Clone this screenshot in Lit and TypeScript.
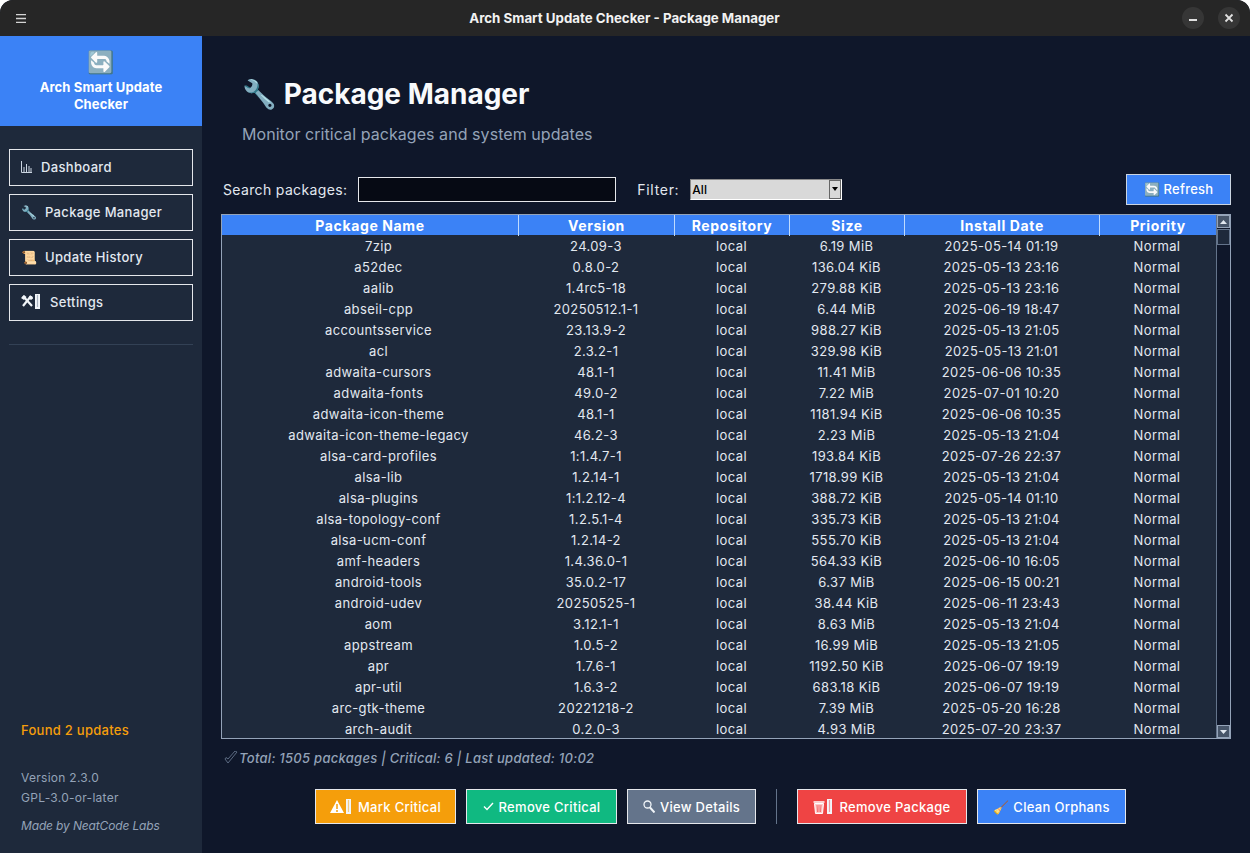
import { LitElement, html, css, svg } from "lit";
import { customElement } from "lit/decorators.js";

const ROWS: string[][] = [
  ["7zip", "24.09-3", "6.19 MiB", "2025-05-14 01:19"],
  ["a52dec", "0.8.0-2", "136.04 KiB", "2025-05-13 23:16"],
  ["aalib", "1.4rc5-18", "279.88 KiB", "2025-05-13 23:16"],
  ["abseil-cpp", "20250512.1-1", "6.44 MiB", "2025-06-19 18:47"],
  ["accountsservice", "23.13.9-2", "988.27 KiB", "2025-05-13 21:05"],
  ["acl", "2.3.2-1", "329.98 KiB", "2025-05-13 21:01"],
  ["adwaita-cursors", "48.1-1", "11.41 MiB", "2025-06-06 10:35"],
  ["adwaita-fonts", "49.0-2", "7.22 MiB", "2025-07-01 10:20"],
  ["adwaita-icon-theme", "48.1-1", "1181.94 KiB", "2025-06-06 10:35"],
  ["adwaita-icon-theme-legacy", "46.2-3", "2.23 MiB", "2025-05-13 21:04"],
  ["alsa-card-profiles", "1:1.4.7-1", "193.84 KiB", "2025-07-26 22:37"],
  ["alsa-lib", "1.2.14-1", "1718.99 KiB", "2025-05-13 21:04"],
  ["alsa-plugins", "1:1.2.12-4", "388.72 KiB", "2025-05-14 01:10"],
  ["alsa-topology-conf", "1.2.5.1-4", "335.73 KiB", "2025-05-13 21:04"],
  ["alsa-ucm-conf", "1.2.14-2", "555.70 KiB", "2025-05-13 21:04"],
  ["amf-headers", "1.4.36.0-1", "564.33 KiB", "2025-06-10 16:05"],
  ["android-tools", "35.0.2-17", "6.37 MiB", "2025-06-15 00:21"],
  ["android-udev", "20250525-1", "38.44 KiB", "2025-06-11 23:43"],
  ["aom", "3.12.1-1", "8.63 MiB", "2025-05-13 21:04"],
  ["appstream", "1.0.5-2", "16.99 MiB", "2025-05-13 21:05"],
  ["apr", "1.7.6-1", "1192.50 KiB", "2025-06-07 19:19"],
  ["apr-util", "1.6.3-2", "683.18 KiB", "2025-06-07 19:19"],
  ["arc-gtk-theme", "20221218-2", "7.39 MiB", "2025-05-20 16:28"],
  ["arch-audit", "0.2.0-3", "4.93 MiB", "2025-07-20 23:37"],
];

const missingGlyph = (hatch: string) => html`<svg class="tofu" viewBox="0 0 5 15"><rect width="5" height="15" fill="#f1f5f9"/>${svg`<path d="M2.500 1.500v12" stroke="${hatch}" stroke-width="1.200" stroke-dasharray="1 1"/>`}</svg>`;

@customElement("app-root")
export class AppRoot extends LitElement {
  static styles = css`
    :host {
      display: block;
      width: 1250px;
      height: 853px;
      font-family: Inter, "Noto Sans", sans-serif;
      color: #e2e8f0;
      background: #ffffff;
    }
    * { box-sizing: border-box; }
    .window {
      width: 1250px;
      height: 853px;
      display: flex;
      flex-direction: column;
      border-radius: 13px 13px 0 0;
      overflow: hidden;
      background: #0f172a;
    }
    .titlebar {
      height: 36px;
      flex: none;
      background: #262626;
      display: grid;
      grid-template-columns: 84px 1fr 84px;
      align-items: center;
      padding: 0 10px 0 16px;
    }
    .menu { width: 10px; height: 9px; display: block; }
    .wintitle {
      text-align: center;
      font-family: Inter, sans-serif;
      font-weight: 700;
      font-size: 13.3px;
      color: #f2f2f2;
      padding-right: 7px;
    }
    .winbtns { display: flex; justify-content: flex-end; gap: 14px; }
    .winbtn {
      width: 22px;
      height: 22px;
      border-radius: 50%;
      background: #363636;
      display: flex;
      align-items: center;
      justify-content: center;
    }
    .winbtn svg { width: 10px; height: 10px; display: block; }
    .body { flex: 1; display: flex; min-height: 0; }
    .sidebar {
      width: 202px;
      flex: none;
      background: #1e293b;
      display: flex;
      flex-direction: column;
    }
    .brand {
      height: 90px;
      background: #3b82f6;
      text-align: center;
      padding-top: 13px;
      color: #fff;
      font-weight: 700;
      font-size: 13px;
      line-height: 17px;
      letter-spacing: 0.12px;
    }
    .brand .logo { display: block; font-size: 22px; line-height: 26px; height: 30px; font-weight: 400; }
    .nav { padding: 23px 9px 0; display: flex; flex-direction: column; gap: 8px; }
    .navbtn {
      height: 37px;
      border: 1px solid #e5e7eb;
      display: flex;
      align-items: center;
      padding: 0 0 2px 11px;
      font-size: 13px;
      font-weight: 500;
      letter-spacing: 0.34px;
      color: #e2e8f0;
      white-space: pre;
    }
    .navsep { height: 1px; background: #334155; margin: 23px 9px 0; }
    .side-foot { margin-top: auto; padding: 0 21px 17px; }
    .found { color: #f59e0b; font-size: 13px; font-weight: 500; letter-spacing: 0.27px; line-height: 16px; margin-bottom: 30px; }
    .meta { color: #94a3b8; font-size: 12px; line-height: 20px; letter-spacing: 0.28px; }
    .made { color: #94a3b8; font-size: 12px; font-style: italic; line-height: 20px; margin-top: 8px; letter-spacing: -0.15px; }
    .main {
      flex: 1;
      min-width: 0;
      display: flex;
      flex-direction: column;
      padding: 0 19px 0 19px;
    }
    .head { padding: 38px 0 0 21px; height: 135px; flex: none; }
    h1 {
      margin: 0;
      font-size: 28px;
      line-height: 40px;
      font-weight: 700;
      color: #f8fafc;
      white-space: pre;
    }
    .sub { margin-top: 10px; font-size: 16px; line-height: 20px; color: #94a3b8; letter-spacing: 0.06px; }
    .toolbar {
      height: 36px;
      flex: none;
      display: flex;
      align-items: center;
      padding: 0 0 0 2px;
      font-size: 14px;
      font-weight: 400;
      color: #e2e8f0;
      letter-spacing: 0.35px;
    }
    .input {
      width: 258px;
      height: 25px;
      margin-left: 11px;
      background: #060a14;
      border: 1px solid #e5e7eb;
    }
    .filter { margin-left: 21px; letter-spacing: 0.7px; }
    .select {
      width: 152px;
      height: 21px;
      margin-left: 11px;
      background: #d9d9d9;
      border: 1px solid;
      border-color: #8a8a8a #fff #fff #8a8a8a;
      color: #000;
      font-size: 12px;
      font-weight: 500;
      display: flex;
      align-items: center;
      justify-content: space-between;
      padding-left: 1px;
      letter-spacing: 0;
    }
    .arrow {
      width: 12px;
      height: 19px;
      background: #d9d9d9;
      border: 1px solid #666;
      display: flex;
      align-items: center;
      justify-content: center;
    }
    .arrow svg { width: 6px; height: 4px; display: block; }
    .refresh {
      margin-left: auto;
      height: 31px;
      width: 105px;
      background: #3b82f6;
      border: 1px solid #cbd5e1;
      color: #fff;
      font-size: 13px;
      font-weight: 500;
      display: flex;
      align-items: center;
      justify-content: center;
      white-space: pre;
      letter-spacing: 0.25px;
    }
    .tablewrap {
      height: 525px;
      flex: none;
      margin-top: 7px;
      border: 1px solid #94a3b8;
      display: flex;
      background: #1e293b;
    }
    .table { flex: 1; min-width: 0; overflow: hidden; }
    .row {
      display: grid;
      grid-template-columns: 297px 156px 115px 115px 195px 1fr;
      height: 21px;
      align-items: center;
      text-align: center;
      font-size: 13px;
      color: #e2e8f0;
      letter-spacing: 0.38px;
    }
    .row .name { padding-left: 16px; }
    .row .cell { padding-right: 2px; }
    .hrow {
      height: 20px;
      background: #3b82f6;
      color: #fff;
      font-weight: 700;
      font-size: 14px;
      letter-spacing: 0.62px;
      align-items: stretch;
    }
    .hrow > div {
      border-right: 1px solid #bfdbfe;
      line-height: 21px;
    }
    .hrow > div:last-child { border-right: none; }
    .scroll {
      width: 14px;
      flex: none;
      background: #0f172a;
      border-left: 1px solid #64748b;
      display: flex;
      flex-direction: column;
    }
    .sbtn {
      height: 13px;
      background: #475569;
      border: 1px solid #94a3b8;
      display: flex;
      align-items: center;
      justify-content: center;
      flex: none;
    }
    .sbtn svg { width: 7px; height: 4px; display: block; }
    .thumb { height: 16px; background: #1e293b; border: 1px solid #64748b; margin-top: 1px; flex: none; }
    .scroll .spacer { flex: 1; }
    .status {
      height: 37px;
      flex: none;
      display: flex;
      align-items: center;
      padding-left: 3px;
      font-size: 13px;
      font-style: italic;
      font-weight: 500;
      color: #94a3b8;
      letter-spacing: 0.28px;
      white-space: pre;
    }
    .actions {
      margin-top: 13px;
      display: flex;
      align-items: center;
      padding-left: 94px;
      gap: 10px;
    }
    .act {
      height: 35px;
      border: 1px solid #e5e7eb;
      color: #fff;
      font-size: 13px;
      font-weight: 500;
      letter-spacing: 0.3px;
      display: flex;
      align-items: center;
      justify-content: center;
      white-space: pre;
      flex: none;
    }
    .critical { width: 141px; background: #f59e0b; }
    .remove { width: 151px; background: #10b981; }
    .details { width: 129px; background: #64748b; }
    .vsep { width: 1px; height: 35px; background: #64748b; margin: 0 10px; flex: none; }
    .danger { width: 170px; background: #ef4444; }
    .clean { width: 149px; background: #3b82f6; }
    .found, .meta, .made { white-space: nowrap; }
    .check { width: 11px; height: 9px; display: block; margin-right: 5px; }
    .statusicon { width: 14px; height: 13px; display: block; margin-right: 1px; }
    .tofu { width: 5px; height: 15px; display: block; flex: none; margin-left: 2px; }
    .glyph { display: block; flex: none; }
    .g-chart { width: 11px; height: 12px; margin-right: 9px; }
    .g-tools { width: 12px; height: 13px; }
    .mr-settings { margin-right: 10px; }
    .g-warn { width: 14px; height: 13px; }
    .g-lens { width: 12px; height: 13px; margin-right: 5px; }
    .g-trash { width: 12px; height: 14px; }
    .mr-act { margin-right: 7px; }
  `;

  render() {
    return html`
      <div class="window">
        <div class="titlebar">
          <svg class="menu" viewBox="0 0 10 9"><path d="M0 0.500h10M0 4.500h10M0 8.500h10" stroke="#d4d4d4" stroke-width="1.600"/></svg>
          <div class="wintitle">Arch Smart Update Checker - Package Manager</div>
          <div class="winbtns">
            <div class="winbtn"><svg viewBox="0 0 10 10"><path d="M1 7h8" stroke="#e0e0e0" stroke-width="1.800"/></svg></div>
            <div class="winbtn"><svg viewBox="0 0 10 10"><path d="M1.500 1.500l7 7M8.500 1.500l-7 7" stroke="#e0e0e0" stroke-width="1.800"/></svg></div>
          </div>
        </div>
        <div class="body">
          <aside class="sidebar">
            <div class="brand"><span class="logo">🔄</span>Arch Smart Update<br />Checker</div>
            <nav class="nav">
              <div class="navbtn"><svg class="glyph g-chart" viewBox="0 0 11 12"><path d="M0.500 0v11.500H11M3 11V6M5.500 11V3M8 11V5M10 11V7" fill="none" stroke="#cbd5e1" stroke-width="1"/></svg><span>Dashboard</span></div>
              <div class="navbtn">🔧  Package Manager</div>
              <div class="navbtn">📜  Update History</div>
              <div class="navbtn"><svg class="glyph g-tools" viewBox="0 0 12 13"><path d="M2 1l9 10M10 1L2 11" stroke="#f1f5f9" stroke-width="2.200"/><path d="M0 3l3-3 2.500 2L3 5zM8.500 1a2.500 2.500 0 0 1 3.500 2.500L10 5 8 3.500z" fill="#f1f5f9"/></svg>${missingGlyph("#64748b")}<span class="mr-settings"></span><span>Settings</span></div>
            </nav>
            <div class="navsep"></div>
            <div class="side-foot">
              <div class="found">Found 2 updates</div>
              <div class="meta">Version 2.3.0</div>
              <div class="meta">GPL-3.0-or-later</div>
              <div class="made">Made by NeatCode Labs</div>
            </div>
          </aside>
          <main class="main">
            <div class="head">
              <h1>🔧 Package Manager</h1>
              <div class="sub">Monitor critical packages and system updates</div>
            </div>
            <div class="toolbar">
              <span>Search packages:</span>
              <div class="input"></div>
              <span class="filter">Filter:</span>
              <div class="select">All<span class="arrow"><svg viewBox="0 0 6 4"><path d="M0 0h6L3 4z" fill="#000"/></svg></span></div>
              <div class="refresh">🔄 Refresh</div>
            </div>
            <div class="tablewrap">
              <div class="table">
                <div class="row hrow">
                  <div>Package Name</div><div>Version</div><div>Repository</div><div>Size</div><div>Install Date</div><div>Priority</div>
                </div>
                ${ROWS.map(
                  (r) => html`<div class="row"><div class="name">${r[0]}</div><div class="cell">${r[1]}</div><div class="cell">local</div><div class="cell">${r[2]}</div><div class="cell">${r[3]}</div><div class="cell">Normal</div></div>`
                )}
              </div>
              <div class="scroll">
                <div class="sbtn"><svg viewBox="0 0 7 4"><path d="M3.500 0L7 4H0z" fill="#e2e8f0"/></svg></div>
                <div class="thumb"></div>
                <div class="spacer"></div>
                <div class="sbtn"><svg viewBox="0 0 7 4"><path d="M0 0h7L3.500 4z" fill="#e2e8f0"/></svg></div>
              </div>
            </div>
            <div class="status"><svg class="statusicon" viewBox="0 0 14 13"><path d="M1 8l3 4 9-11-2-1-7 8-2-1.500z" fill="none" stroke="#64748b" stroke-width="0.900"/></svg><span>Total: 1505 packages | Critical: 6 | Last updated: 10:02</span></div>
            <div class="actions">
              <div class="act critical"><svg class="glyph g-warn" viewBox="0 0 14 13"><path d="M7 0l7 13H0z" fill="#fff"/><path d="M7 4v5M7 10v2" stroke="#f59e0b" stroke-width="1.500"/></svg>${missingGlyph("#f59e0b")}<span class="mr-act"></span><span>Mark Critical</span></div>
              <div class="act remove"><svg class="check" viewBox="0 0 11 9"><path d="M1 4.500l3 3 6-6.500" fill="none" stroke="#fff" stroke-width="1.400"/></svg><span>Remove Critical</span></div>
              <div class="act details"><svg class="glyph g-lens" viewBox="0 0 12 13"><circle cx="4.500" cy="4.500" r="3.500" fill="none" stroke="#f1f5f9" stroke-width="1.300"/><path d="M7 7.500l4.500 5" stroke="#f1f5f9" stroke-width="2"/></svg><span>View Details</span></div>
              <div class="vsep"></div>
              <div class="act danger"><svg class="glyph g-trash" viewBox="0 0 12 14"><path d="M0.500 2h11" stroke="#fff" stroke-width="1.500"/><path d="M1.500 3.500h9l-1 10h-7z" fill="#fecaca" stroke="#fff" stroke-width="1"/><path d="M4 5l.5 7M6 5v7M8 5l-.5 7" stroke="#ef4444" stroke-width="0.700"/></svg>${missingGlyph("#ef4444")}<span class="mr-act"></span><span>Remove Package</span></div>
              <div class="act clean">🧹 Clean Orphans</div>
            </div>
          </main>
        </div>
      </div>
    `;
  }
}
